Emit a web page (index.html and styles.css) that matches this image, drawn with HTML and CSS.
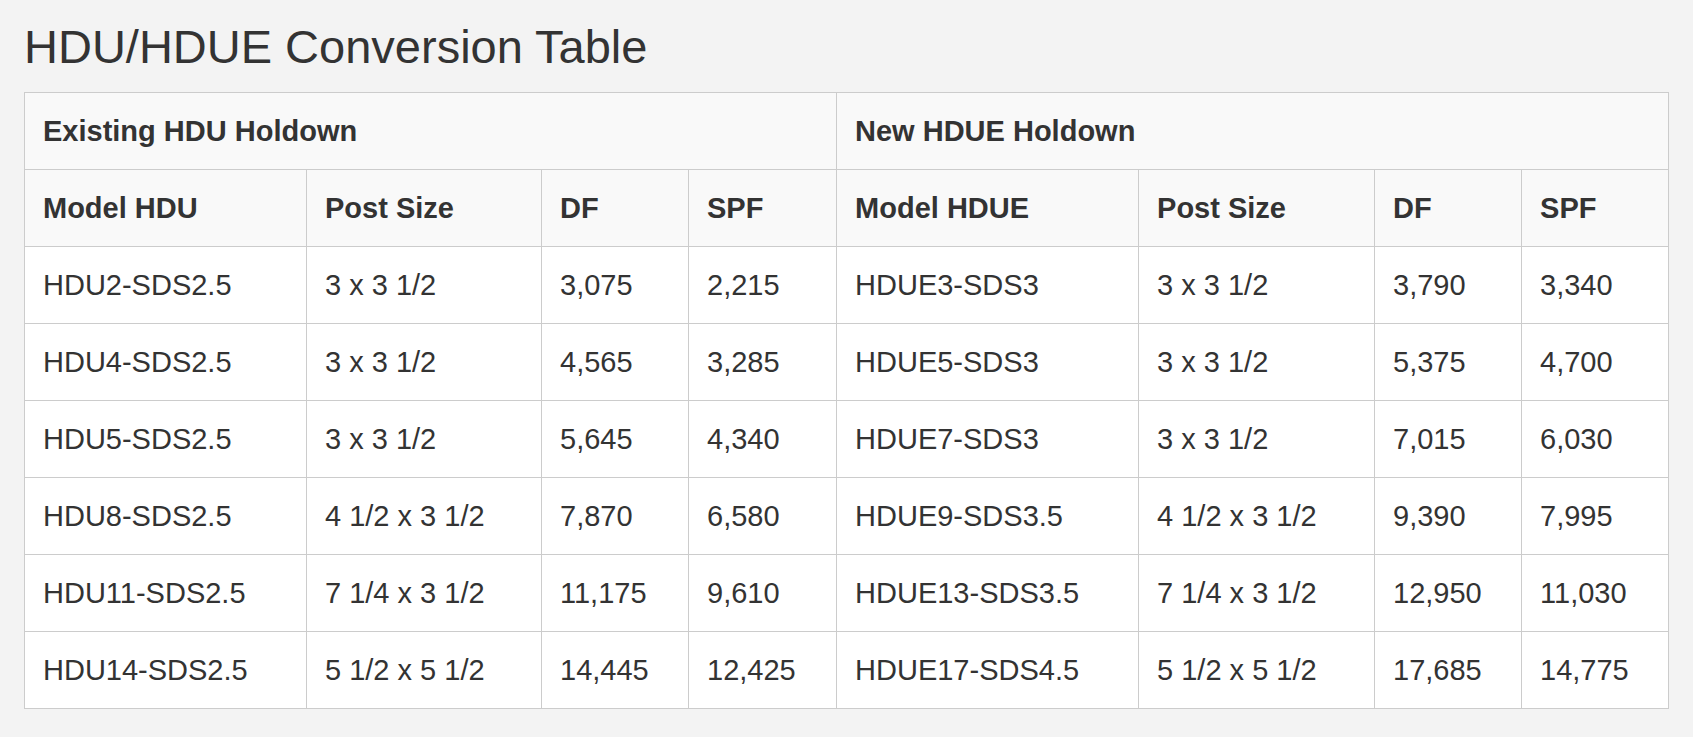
FILE: index.html
```html
<!DOCTYPE html>
<html lang="en">
<head>
<meta charset="utf-8">
<title>HDU/HDUE Conversion Table</title>
<link rel="stylesheet" href="styles.css">
</head>
<body>
<div class="page">
  <h1 class="title">HDU/HDUE Conversion Table</h1>
  <table class="conv">
    <colgroup>
      <col class="c-model1">
      <col class="c-post1">
      <col class="c-num">
      <col class="c-num2">
      <col class="c-model2">
      <col class="c-post2">
      <col class="c-num">
      <col class="c-num">
    </colgroup>
    <thead>
      <tr>
        <th colspan="4">Existing HDU Holdown</th>
        <th colspan="4">New HDUE Holdown</th>
      </tr>
      <tr>
        <th>Model HDU</th>
        <th>Post Size</th>
        <th>DF</th>
        <th>SPF</th>
        <th>Model HDUE</th>
        <th>Post Size</th>
        <th>DF</th>
        <th>SPF</th>
      </tr>
    </thead>
    <tbody>
      <tr><td>HDU2-SDS2.5</td><td>3 x 3 1/2</td><td>3,075</td><td>2,215</td><td>HDUE3-SDS3</td><td>3 x 3 1/2</td><td>3,790</td><td>3,340</td></tr>
      <tr><td>HDU4-SDS2.5</td><td>3 x 3 1/2</td><td>4,565</td><td>3,285</td><td>HDUE5-SDS3</td><td>3 x 3 1/2</td><td>5,375</td><td>4,700</td></tr>
      <tr><td>HDU5-SDS2.5</td><td>3 x 3 1/2</td><td>5,645</td><td>4,340</td><td>HDUE7-SDS3</td><td>3 x 3 1/2</td><td>7,015</td><td>6,030</td></tr>
      <tr><td>HDU8-SDS2.5</td><td>4 1/2 x 3 1/2</td><td>7,870</td><td>6,580</td><td>HDUE9-SDS3.5</td><td>4 1/2 x 3 1/2</td><td>9,390</td><td>7,995</td></tr>
      <tr><td>HDU11-SDS2.5</td><td>7 1/4 x 3 1/2</td><td>11,175</td><td>9,610</td><td>HDUE13-SDS3.5</td><td>7 1/4 x 3 1/2</td><td>12,950</td><td>11,030</td></tr>
      <tr><td>HDU14-SDS2.5</td><td>5 1/2 x 5 1/2</td><td>14,445</td><td>12,425</td><td>HDUE17-SDS4.5</td><td>5 1/2 x 5 1/2</td><td>17,685</td><td>14,775</td></tr>
    </tbody>
  </table>
</div>
</body>
</html>
```

FILE: styles.css
```css
html, body {
  margin: 0;
  padding: 0;
  background: #f3f3f3;
}

body {
  font-family: "Liberation Sans", Arial, Helvetica, sans-serif;
  color: #333333;
}

.page {
  padding: 20px 24px 0 24px;
}

.title {
  margin: 0 0 19px 0;
  font-size: 47px;
  line-height: 53px;
  font-weight: normal;
  color: #333333;
}

.conv {
  width: 1645px;
  table-layout: fixed;
  border-collapse: collapse;
  font-size: 29px;
  line-height: 40px;
}

.c-model1 { width: 282px; }
.c-post1 { width: 235px; }
.c-num { width: 147px; }
.c-num2 { width: 148px; }
.c-model2 { width: 302px; }
.c-post2 { width: 236px; }

.conv th,
.conv td {
  border: 1px solid #cccccc;
  padding: 18px 17px 18px 18px;
  text-align: left;
  vertical-align: middle;
  white-space: nowrap;
}

.conv th {
  background: #f9f9f9;
  font-weight: bold;
}

.conv td {
  background: #ffffff;
  font-weight: normal;
}
```
